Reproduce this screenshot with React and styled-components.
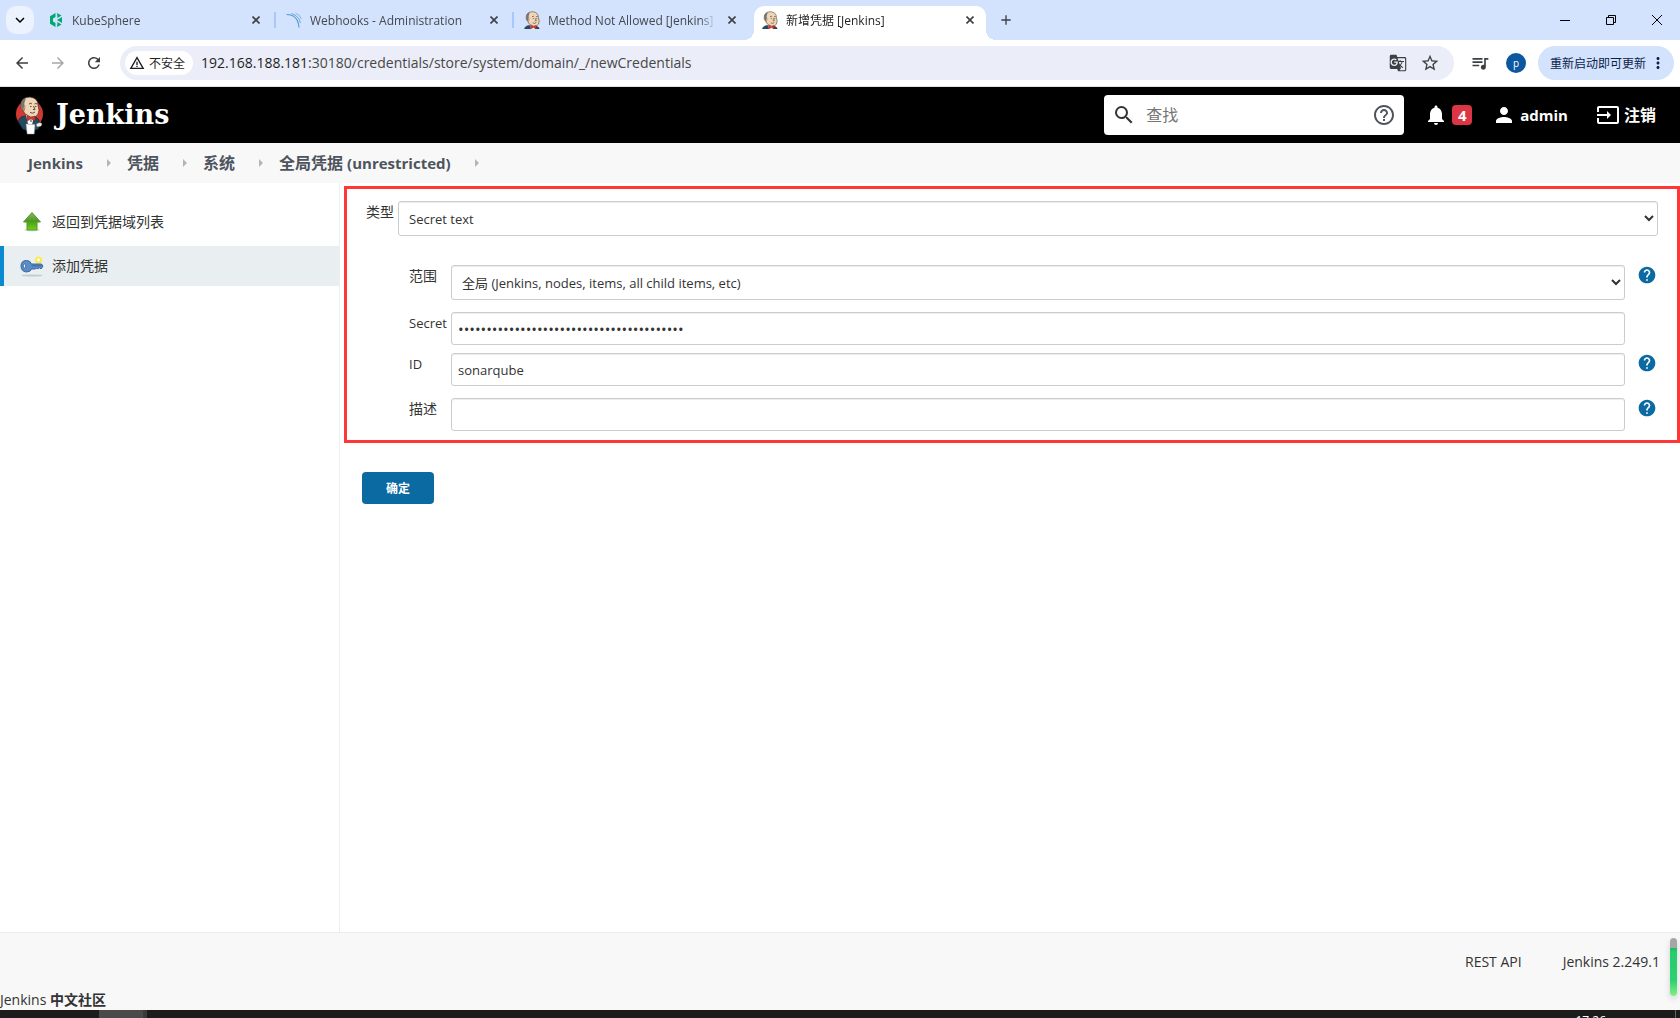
import React from 'react';
import styled, { createGlobalStyle, css } from 'styled-components';
import {
  MdAdd,
  MdArrowBack,
  MdArrowForward,
  MdGTranslate,
  MdHelp,
  MdHelpOutline,
  MdInput,
  MdKeyboardArrowDown,
  MdMoreVert,
  MdNotifications,
  MdPerson,
  MdQueueMusic,
  MdRefresh,
  MdSearch,
  MdStarBorder,
  MdWarningAmber,
} from 'react-icons/md';

const GlobalStyle = createGlobalStyle`
  * {
    box-sizing: border-box;
  }

  body {
    margin: 0;
    background: #fff;
    color: #333;
    font-family: "Open Sans", "Noto Sans CJK SC", sans-serif;
    font-size: 13px;
    line-height: 20px;
  }

  button, input, select {
    font-family: inherit;
  }

  a {
    color: inherit;
    text-decoration: none;
  }
`;

const Screen = styled.div`
  display: flex;
  flex-direction: column;
  min-height: 100vh;
`;

/* ---------- browser window ---------- */

const TabStrip = styled.div`
  display: flex;
  height: 40px;
  padding-left: 6px;
  background: #d3e2fd;
`;

const TabSearch = styled.button`
  display: flex;
  align-items: center;
  justify-content: center;
  width: 28px;
  height: 28px;
  margin: 6px 6px 0 0;
  padding: 0;
  border: none;
  border-radius: 10px;
  background: #ecf2fe;
  font-size: 18px;
`;

const Tab = styled.div`
  position: relative;
  display: flex;
  align-items: center;
  width: 232px;
  margin: 6px 6px 0 0;
  padding: 0 8px 6px;
  border-radius: 10px 10px 0 0;
  color: #45484d;

  ${({ $divider }) => $divider && css`
    &::after {
      content: '';
      position: absolute;
      top: 6px;
      right: -4px;
      width: 2px;
      height: 16px;
      background: #a8c7fa;
    }
  `}

  ${({ $active }) => $active && css`
    background: #fff;
    color: #1f1f1f;

    &::before,
    &::after {
      content: '';
      position: absolute;
      bottom: 0;
      width: 10px;
      height: 10px;
    }

    &::before {
      left: -10px;
      background: radial-gradient(circle at 0 0, transparent 10px, #fff 10px);
    }

    &::after {
      right: -10px;
      background: radial-gradient(circle at 100% 0, transparent 10px, #fff 10px);
    }
  `}
`;

const TabTitle = styled.span`
  flex: 1;
  min-width: 0;
  margin: 0 8px;
  padding-top: 1px;
  overflow: hidden;
  white-space: nowrap;
  font-size: 12px;
  mask-image: linear-gradient(to right, #000 calc(100% - 16px), transparent);
`;

const IconButton = styled.button`
  display: flex;
  align-items: center;
  justify-content: center;
  flex: none;
  width: ${({ $width }) => $width || 16}px;
  padding: 0;
  border: none;
  background: none;
  color: ${({ $color }) => $color || '#3c4043'};
  font-size: ${({ $size }) => $size || 14}px;
`;

const WindowButtons = styled.div`
  display: flex;
  margin-left: auto;
`;

const Toolbar = styled.div`
  display: flex;
  align-items: center;
  height: 47px;
  padding: 0 6px 1px 4px;
  border-bottom: 1px solid #dfe1e5;
  background: #fff;
`;

const Omnibox = styled.div`
  display: flex;
  align-items: center;
  flex: 1;
  height: 34px;
  margin-left: 8px;
  padding: 0 13px 0 5px;
  border-radius: 17px;
  background: #ebeef8;
`;

const SecurityChip = styled.button`
  display: flex;
  align-items: center;
  gap: 4px;
  flex: none;
  height: 24px;
  padding: 0 8px 0 4px;
  border: none;
  border-radius: 12px;
  background: #fff;
  color: #1f1f1f;
  font-size: 12px;
`;

const Address = styled.div`
  flex: 1;
  margin-left: 8px;
  color: #474747;
  font-size: 14px;

  b {
    color: #1f1f1f;
    font-weight: 400;
  }
`;

const Avatar = styled.button`
  width: 20px;
  height: 20px;
  margin-right: 12px;
  padding: 0;
  border: none;
  border-radius: 50%;
  background: #0b57a0;
  color: #fff;
  font-size: 10px;
  line-height: 18px;
`;

const UpdateButton = styled.button`
  display: flex;
  align-items: center;
  gap: 3px;
  height: 34px;
  padding: 0 7px 0 12px;
  border: none;
  border-radius: 17px;
  background: #d3e2fd;
  color: #0b1f4b;
  font-size: 12px;
`;

/* ---------- jenkins header ---------- */

const Header = styled.header`
  display: flex;
  align-items: center;
  height: 56px;
  padding: 0 24px 0 14px;
  background: #000;
  color: #fff;
`;

const Brand = styled.a`
  display: flex;
  align-items: center;
  gap: 12px;
  margin-right: auto;
  font-family: "DejaVu Serif", serif;
  font-size: 27px;
  font-weight: 700;
  line-height: 36px;
`;

const SearchBox = styled.form`
  display: flex;
  align-items: center;
  width: 300px;
  height: 40px;
  padding: 0 8px;
  border-radius: 4px;
  background: #fff;
`;

const SearchInput = styled.input`
  flex: 1;
  min-width: 0;
  margin-left: 10px;
  padding: 0;
  border: none;
  background: none;
  font-size: 16px;

  &::placeholder {
    color: #757575;
  }
`;

const HeaderLink = styled.a`
  display: flex;
  align-items: center;
  gap: 4px;
  margin-left: ${({ $gap }) => $gap || 20}px;
  font-size: ${({ $size }) => $size || 15}px;
  font-weight: 700;
  line-height: 20px;
`;

const Badge = styled.span`
  width: 20px;
  border-radius: 4px;
  background: #dc3545;
  text-align: center;
`;

const Breadcrumbs = styled.nav`
  display: flex;
  align-items: center;
  height: 40px;
  padding-left: 28px;
  background: #f8f8f8;
  color: #4d545d;
  font-size: 16px;
  font-weight: 700;
`;

const CrumbArrow = styled.i`
  width: 4px;
  margin: 0 16px 0 24px;
  border: solid transparent;
  border-width: 4px 0 4px 4px;
  border-left-color: #b5b5b5;
`;

const Latin = styled.span`
  font-size: 15px;
`;

/* ---------- page body ---------- */

const Page = styled.div`
  display: flex;
  flex: 1;
`;

const SidePanel = styled.aside`
  width: 340px;
  padding-top: 19px;
  border-right: 1px solid #eceef1;
`;

const Task = styled.a`
  display: flex;
  align-items: center;
  gap: 8px;
  height: 40px;
  margin-bottom: 4px;
  padding-left: 16px;
  border-left: 4px solid ${({ $active }) => ($active ? '#0b8ad2' : 'transparent')};
  background: ${({ $active }) => ($active ? '#e9eff1' : 'none')};
  font-size: 14px;
`;

const MainPanel = styled.main`
  flex: 1;
  min-width: 0;
  padding: 3px 0 0 4px;
`;

const FormFrame = styled.section`
  padding: 12px 19px 9px;
  border: 3px solid #ff3737;
`;

const Row = styled.div`
  display: grid;
  grid-template-columns: ${({ $nested }) => ($nested ? '42px 1fr 33px' : '32px 1fr')};
  align-items: start;
  margin-top: ${({ $gap }) => $gap || 0}px;
  padding-left: ${({ $nested }) => ($nested ? 43 : 0)}px;
`;

const Label = styled.label`
  font-size: ${({ $latin }) => ($latin ? 13 : 14)}px;
  line-height: 22px;
`;

const control = css`
  width: 100%;
  border: 1px solid #ccc;
  border-radius: 3px;
  background: #fff;
  box-shadow: inset 0 1px 1px rgba(0, 0, 0, 0.075);
  color: #333;
  font-size: 13px;
`;

const Select = styled.select`
  ${control}
  height: 35px;
  padding: 0 6px;
`;

const Input = styled.input`
  ${control}
  height: 33px;
  padding: 0 6px;

  &[type='password'] {
    font-size: 15px;
  }
`;

const HelpButton = styled.button`
  display: flex;
  align-items: center;
  height: 20px;
  margin-left: 12px;
  padding: 0;
  border: none;
  background: none;
  color: #0b6aa2;
  font-size: 20px;
`;

const SubmitButton = styled.button`
  width: 72px;
  height: 32px;
  margin: 29px 0 0 18px;
  border: none;
  border-radius: 4px;
  background: #0b6aa2;
  color: #fff;
  font-size: 12px;
  font-weight: 700;
`;

const Footer = styled.footer`
  position: relative;
  padding-top: 19px;
  border-top: 1px solid #e9ecee;
  background: #f8f8f8;
  font-size: 14px;
  font-weight: 500;
`;

const FooterLinks = styled.div`
  display: flex;
  justify-content: flex-end;
  gap: 41px;
  padding-right: 20px;
`;

const Community = styled.a`
  display: block;
  margin-top: 18px;
`;

const Meter = styled.div`
  position: absolute;
  top: 5px;
  right: 3px;
  width: 7px;
  height: 58px;
  border-radius: 4px;
  background: linear-gradient(#a6a6a6 10px, #1fb866 10px, #26cc6d 14px, #2ecf70 42px, #86ef86);
  box-shadow: 0 3px 6px rgba(0, 0, 0, 0.15);
`;

const Taskbar = styled.div`
  display: flex;
  height: 8px;
  overflow: hidden;
  background: #1c1c1c;
  color: #fff;
  font-size: 12px;
`;

const TaskbarItem = styled.div`
  width: 48px;
  margin-left: 99px;
  border-right: 4px solid #3a3a3a;
  background: #4a4a4a;
`;

const Clock = styled.div`
  margin-left: auto;
  padding: 1px 69px 0 0;
`;

const ShowDesktop = styled.div`
  width: 5px;
  border-left: 1px solid #666;
`;

/* ---------- drawings ---------- */

const Butler = ({ full }) => (
  <svg
    width={full ? 30 : 16}
    height={full ? 40 : 18}
    viewBox={full ? '0 0 30 40' : '4 1 22 25'}
    aria-hidden="true"
  >
    {full && <ellipse cx="15.5" cy="19" rx="13.5" ry="14" fill="#d33833" />}
    <path d="M4.500 27q0-5 6-6l10 1q5 1 5 6l-1 6-8 3-8-3z" fill="#234a5e" stroke="#10202c" strokeWidth=".6" />
    <path d="M12 20l8 1-2 9-4-1z" fill="#fff" />
    <path
      d="M7 9q1-7 9-7 8 1 8 8l1 5q0 5-4 7-5 1-8-2-3-1-4-5-3-2-2-6z"
      fill="#f0d6b7"
      stroke="#3a2d24"
      strokeWidth=".7"
    />
    <path d="M7 11q-1-6 5-8.500l-1.500 5-.5 4q0 2-1 4-2-2-2-4.500z" fill="#77756f" />
    <path d="M9 11q2-2 2 1l-1 4" fill="none" stroke="#8a6d52" strokeWidth=".8" />
    <path d="M15 9q2-1.500 3 0M20.500 9q1.500-1 2.500 0M16 11.500h1.500M21 11.500h1.500M19.500 11l1.500 3.500h-2M16 17.500q3 1.500 5-.5" fill="none" stroke="#3a2d24" strokeWidth=".8" />
    <path d="M13 20.500l4 2 4-1.500v5l-4-2-4 2z" fill="#d33833" stroke="#81200f" strokeWidth=".5" />
    {full && (
      <>
        <path d="M17 25v2M18 29v1" stroke="#1d3a4f" />
        <path d="M12 29l9 .5-.8 9.500h-7z" fill="#fff" stroke="#999" strokeWidth=".5" />
        <path d="M22 29q5-3 6 0 0 3-5 3z" fill="#eee" stroke="#555" strokeWidth=".5" />
      </>
    )}
  </svg>
);

const KubeIcon = () => (
  <svg width="16" height="16" viewBox="0 0 16 16" fill="#00a971" aria-hidden="true">
    <path d="M7.500 1v4L5 6.500v3L7.500 11v4L2 11.800V4.200z" />
    <path d="M9 1l4.500 2.600L9.500 6zM14 5v6L9 8z" />
    <path d="M9 15l4.500-2.600L9.500 10z" />
  </svg>
);

const SonarIcon = () => (
  <svg width="16" height="16" viewBox="0 0 16 16" fill="none" stroke="#4e9bcd" aria-hidden="true">
    <path d="M.5 2.500Q12 2.500 13 15.500" strokeWidth="1.100" />
    <path d="M5.500 1.500Q13 4 14.500 11" strokeWidth=".8" />
    <path d="M9.500 1Q14 3 15.500 7" strokeWidth=".6" />
  </svg>
);

const TabCloseIcon = () => (
  <svg width="8" height="8" viewBox="0 0 8 8" stroke="currentColor" strokeWidth="1.600" aria-hidden="true">
    <path d="M.5.500l7 7M7.500.500l-7 7" />
  </svg>
);

const UpIcon = () => (
  <svg width="24" height="24" viewBox="0 0 24 24" aria-hidden="true">
    <defs>
      <linearGradient id="up" x1="0" y1="0" x2="0" y2="1">
        <stop offset="0" stopColor="#8ab86a" />
        <stop offset=".5" stopColor="#4b9a1c" />
        <stop offset="1" stopColor="#73d216" />
      </linearGradient>
    </defs>
    <ellipse cx="12" cy="20" rx="8" ry="1.500" fill="#ddd" />
    <path d="M12 2.500L20.500 12H17v8H7v-8H3.500z" fill="url(#up)" stroke="#4f9a20" />
  </svg>
);

const KeyIcon = () => (
  <svg width="24" height="24" viewBox="0 0 24 24" aria-hidden="true">
    <ellipse cx="12" cy="21.500" rx="10.500" ry="1" fill="#c5cacc" />
    <circle cx="18.500" cy="6" r="2.500" fill="#fff" stroke="#fce94f" strokeWidth="2.200" />
    <path
      d="M6.500 6.500q4 0 5 3.500h10l1.500 2-1.500 2.500H20l-1-1-1 1.500-1.500-1-1 1h-4q-1 3-5 3Q1 17.500 1 12t5.500-5.500z"
      fill="#5b8cc6"
      stroke="#2f5e9b"
      strokeWidth=".9"
    />
    <path d="M11.500 11.800h10" stroke="#2f5e9b" strokeWidth=".8" />
    <ellipse cx="4.500" cy="12" rx="1.300" ry="2" fill="#e9eff1" stroke="#2f5e9b" strokeWidth=".8" />
  </svg>
);

const MinimizeIcon = () => (
  <svg width="10" height="10" viewBox="0 0 10 10" stroke="#000" aria-hidden="true">
    <path d="M0 5.500h10" />
  </svg>
);

const RestoreIcon = () => (
  <svg width="10" height="10" viewBox="0 0 10 10" fill="none" stroke="#000" aria-hidden="true">
    <path d="M.5 2.500h7v7h-7zM2.500 2.500v-2h7v7h-2" />
  </svg>
);

const CrossIcon = () => (
  <svg width="10" height="10" viewBox="0 0 10 10" stroke="#000" aria-hidden="true">
    <path d="M0 0l10 10M10 0L0 10" />
  </svg>
);

/* ---------- parts ---------- */

const tabs = [
  { title: 'KubeSphere', icon: <KubeIcon />, divider: true },
  { title: 'Webhooks - Administration', icon: <SonarIcon />, divider: true },
  { title: 'Method Not Allowed [Jenkins]', icon: <Butler /> },
  { title: '新增凭据 [Jenkins]', icon: <Butler />, active: true },
];

const crumbs = [
  { latin: 'Jenkins' },
  { name: '凭据' },
  { name: '系统' },
  { name: '全局凭据 ', latin: '(unrestricted)' },
];

const Browser = () => (
  <>
    <TabStrip>
      <TabSearch aria-label="Search tabs"><MdKeyboardArrowDown /></TabSearch>
      {tabs.map((tab) => (
        <Tab key={tab.title} $active={tab.active} $divider={tab.divider}>
          {tab.icon}
          <TabTitle>{tab.title}</TabTitle>
          <IconButton aria-label="Close tab"><TabCloseIcon /></IconButton>
        </Tab>
      ))}
      <IconButton $width={28} $size={16} aria-label="New tab"><MdAdd /></IconButton>
      <WindowButtons>
        <IconButton $width={46} aria-label="Minimize"><MinimizeIcon /></IconButton>
        <IconButton $width={46} aria-label="Restore"><RestoreIcon /></IconButton>
        <IconButton $width={46} aria-label="Close"><CrossIcon /></IconButton>
      </WindowButtons>
    </TabStrip>
    <Toolbar>
      <IconButton $width={36} $size={18} aria-label="Back"><MdArrowBack /></IconButton>
      <IconButton $width={36} $size={18} $color="#a6a8ab" aria-label="Forward"><MdArrowForward /></IconButton>
      <IconButton $width={36} $size={18} aria-label="Reload"><MdRefresh /></IconButton>
      <Omnibox>
        <SecurityChip><MdWarningAmber size={16} />不安全</SecurityChip>
        <Address><b>192.168.188.181</b>:30180/credentials/store/system/domain/_/newCredentials</Address>
        <IconButton $width={42} $size={18} aria-label="Translate"><MdGTranslate /></IconButton>
        <IconButton $width={22} $size={20} aria-label="Bookmark"><MdStarBorder /></IconButton>
      </Omnibox>
      <IconButton $width={52} $size={20} aria-label="Media"><MdQueueMusic /></IconButton>
      <Avatar>p</Avatar>
      <UpdateButton>重新启动即可更新<MdMoreVert size={18} /></UpdateButton>
    </Toolbar>
  </>
);

const Help = () => (
  <HelpButton type="button" aria-label="Help"><MdHelp /></HelpButton>
);

const CredentialForm = () => (
  <form>
    <FormFrame>
      <Row>
        <Label htmlFor="kind">类型</Label>
        <Select id="kind"><option>Secret text</option></Select>
      </Row>
      <Row $nested $gap={29}>
        <Label htmlFor="scope">范围</Label>
        <Select id="scope"><option>全局 (Jenkins, nodes, items, all child items, etc)</option></Select>
        <Help />
      </Row>
      <Row $nested $gap={12}>
        <Label $latin htmlFor="secret">Secret</Label>
        <Input id="secret" type="password" defaultValue={'0'.repeat(40)} />
      </Row>
      <Row $nested $gap={8}>
        <Label $latin htmlFor="id">ID</Label>
        <Input id="id" defaultValue="sonarqube" />
        <Help />
      </Row>
      <Row $nested $gap={12}>
        <Label htmlFor="description">描述</Label>
        <Input id="description" />
        <Help />
      </Row>
    </FormFrame>
    <SubmitButton type="button">确定</SubmitButton>
  </form>
);

const App = () => {
  return (
    <Screen>
      <GlobalStyle />
      <Browser />
      <Header>
        <Brand href="#"><Butler full />Jenkins</Brand>
        <SearchBox>
          <MdSearch size={24} color="#333" />
          <SearchInput placeholder="查找" aria-label="查找" />
          <MdHelpOutline size={24} color="#4d545d" />
        </SearchBox>
        <HeaderLink href="#"><MdNotifications size={24} /><Badge>4</Badge></HeaderLink>
        <HeaderLink href="#"><MdPerson size={24} />admin</HeaderLink>
        <HeaderLink href="#" $gap={28} $size={16}><MdInput size={24} />注销</HeaderLink>
      </Header>
      <Breadcrumbs>
        {crumbs.map(({ name, latin }) => (
          <React.Fragment key={name || latin}>
            <a href="#">{name}{latin && <Latin>{latin}</Latin>}</a>
            <CrumbArrow />
          </React.Fragment>
        ))}
      </Breadcrumbs>
      <Page>
        <SidePanel>
          <Task href="#"><UpIcon />返回到凭据域列表</Task>
          <Task href="#" $active><KeyIcon />添加凭据</Task>
        </SidePanel>
        <MainPanel>
          <CredentialForm />
        </MainPanel>
      </Page>
      <Footer>
        <FooterLinks>
          <a href="#">REST API</a>
          <a href="#">Jenkins 2.249.1</a>
        </FooterLinks>
        <Community href="#">Jenkins <b>中文社区</b></Community>
        <Meter />
      </Footer>
      <Taskbar>
        <TaskbarItem />
        <Clock>17:26</Clock>
        <ShowDesktop />
      </Taskbar>
    </Screen>
  );
};

export default App;
